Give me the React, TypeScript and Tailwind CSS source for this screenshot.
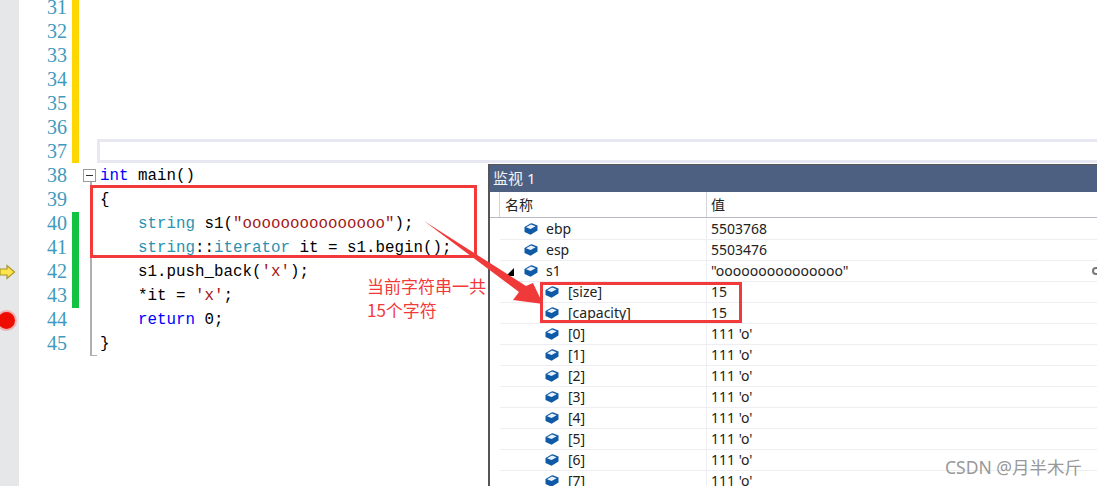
const mono = "font-['Liberation_Mono',monospace]";

type Tok = { t: string; c?: string };

const KW = "text-[#0000ff]";
const TY = "text-[#2b91af]";
const ST = "text-[#a31515]";

const codeLines: Record<number, Tok[]> = {
  38: [{ t: "int", c: KW }, { t: " main()" }],
  39: [{ t: "{" }],
  40: [{ t: "    " }, { t: "string", c: TY }, { t: " s1(" }, { t: '"ooooooooooooooo"', c: ST }, { t: ");" }],
  41: [{ t: "    " }, { t: "string", c: TY }, { t: "::" }, { t: "iterator", c: TY }, { t: " it = s1.begin();" }],
  42: [{ t: "    s1.push_back(" }, { t: "'x'", c: ST }, { t: ");" }],
  43: [{ t: "    *it = " }, { t: "'x'", c: ST }, { t: ";" }],
  44: [{ t: "    " }, { t: "return", c: KW }, { t: " 0;" }],
  45: [{ t: "}" }],
};

const lineNums = [31, 32, 33, 34, 35, 36, 37, 38, 39, 40, 41, 42, 43, 44, 45];

function Cube() {
  return (
    <svg width="14" height="12" viewBox="0 0 14 12" className="shrink-0">
      <path d="M0.5 4 L6.5 0.5 Q7.5 0.2 8.5 0.5 L13.5 2.5 V7.5 L7 11.5 Q6.5 11.8 6 11.5 L0.5 9 Z" fill="#0f5aa6" />
      <path d="M2 4.2 L7 1.6 L11.6 3.2 L6.6 6 Z" fill="#eaf2fb" />
    </svg>
  );
}

function WatchRow({ name, value, indent }: { name: string; value: string; indent?: boolean }) {
  return (
    <div className="flex h-[21px] ml-[10px] border-b border-[#eeeef2] items-center">
      <div className={`w-[206px] flex items-center shrink-0 ${indent ? "pl-[45px]" : "pl-[24px]"}`}>
        <Cube />
        <span className={`${indent ? "ml-[9px]" : "ml-[8px]"} pb-[2px] text-[#222]`}>{name}</span>
      </div>
      <div className="pl-[4px] pb-[2px] border-l border-[#eeeef2] h-full flex items-center text-[#222] whitespace-nowrap">{value}</div>
    </div>
  );
}

export default function App() {
  const rows = ["[0]", "[1]", "[2]", "[3]", "[4]", "[5]", "[6]", "[7]"];
  return (
    <div className="relative w-[1097px] h-[486px] overflow-hidden bg-white flex">
      {/* glyph margin */}
      <div className="w-[19px] shrink-0 bg-[#e6e7e8] relative">
        <svg width="16" height="16" viewBox="0 0 16 16" className="absolute left-0 top-[264px]">
          <path d="M0 5 H7 V1.5 L14.5 8 L7 14.5 V11 H0 Z" fill="#fde64b" stroke="#a8962e" strokeWidth="1.2" />
        </svg>
        <div className="absolute left-[-4px] top-[310px] w-[21px] h-[21px] rounded-full bg-[#ee0c00] border-2 border-[#eeb4b4]" />
      </div>

      {/* line numbers and change bar */}
      <div className="w-[53px] shrink-0 -mt-[5px] flex flex-col items-end pr-[5px] font-['Liberation_Serif',serif] text-[20px] text-[#3f9abd]">
        {lineNums.map((n) => (
          <div key={n} className="h-[24px] leading-[24px]">{n}</div>
        ))}
      </div>
      <div className="w-[7px] shrink-0 flex flex-col">
        <div className="h-[163px] bg-[#ffd700]" />
        <div className="h-[49px]" />
        <div className="h-[96px] bg-[#14c242]" />
      </div>

      {/* code */}
      <div className="flex-1 relative">
        <div className="h-[139px]" />
        <div className="h-[24px] ml-[18px] border-[3px] border-r-0 border-[#e8e8f2]" />
        <div className={`${mono} text-[15.83px] text-black pl-[21px] pt-[1px] whitespace-pre`}>
          {Object.keys(codeLines).map((k) => (
            <div key={k} className="h-[24px] leading-[24px]">
              {codeLines[Number(k)].map((tok, i) => (
                <span key={i} className={tok.c}>{tok.t}</span>
              ))}
            </div>
          ))}
        </div>
        {/* fold marker */}
        <div className="absolute left-[4px] top-[169px] w-[13px] h-[13px] border border-[#9a9a9a] flex items-center justify-center bg-white">
          <div className="w-[7px] h-[1px] bg-[#333]" />
        </div>
        <div className="absolute left-[11px] top-[182px] w-[7px] h-[174px] border-l-2 border-b border-[#b0b0b0]" />
      </div>

      {/* watch window */}
      <div className="absolute left-[488px] top-[164px] w-[609px] h-[322px] bg-white border-l-2 border-t border-[#555] font-['Noto_Sans','Noto_Sans_CJK_SC',sans-serif] text-[14px]">
        <div className="h-[27px] bg-[#4d6082] text-[#f2f4f8] text-[15px] flex items-center pl-[3px]">监视 1</div>
        <div className="h-[26px] flex border-b border-[#b9b9c4] text-[#222] items-center">
          <div className="w-[10px] h-full border-r border-[#d4d4dc]" />
          <div className="w-[206px] pl-[5px]">名称</div>
          <div className="pl-[4px] border-l border-[#d4d4dc] h-full flex items-center">值</div>
        </div>
        <div className="mt-[1px]">
          <WatchRow name="ebp" value="5503768" />
          <WatchRow name="esp" value="5503476" />
          <WatchRow name="s1" value={'"ooooooooooooooo"'} />
          <WatchRow name="[size]" value="15" indent />
          <WatchRow name="[capacity]" value="15" indent />
          {rows.map((r) => (
            <WatchRow key={r} name={r} value="111 'o'" indent />
          ))}
        </div>
        <div className="absolute left-[16px] top-[103px] w-0 h-0 border-l-[8px] border-l-transparent border-b-[8px] border-b-black" />
        <div className="absolute right-[-3px] top-[102px] w-[8px] h-[8px] rounded-full border-2 border-[#777]" />
      </div>

      {/* annotations */}
      <div className="absolute left-[90px] top-[185px] w-[387px] h-[73px] border-[3px] border-[#f33a3a]" />
      <div className="absolute left-[540px] top-[282px] w-[202px] h-[41px] border-[3px] border-[#f33a3a]" />
      <svg width="130" height="100" viewBox="0 0 130 100" className="absolute left-[420px] top-[218px]">
        <path d="M4 3 L106 68 L113 65 L123 86 L93 82 L99 74 Z" fill="#f03a3a" />
      </svg>
      <div className="absolute left-[367px] top-[274px] text-[17px] leading-[24px] text-[#f33a3a] font-['Noto_Sans_CJK_SC',sans-serif]">
        <div>当前字符串一共</div>
        <div>15个字符</div>
      </div>
      <div className="absolute left-[945px] top-[456px] text-[17.5px] leading-[22px] text-[#999] font-['Noto_Sans','Noto_Sans_CJK_SC',sans-serif] whitespace-nowrap">
        CSDN @月半木斤
      </div>
    </div>
  );
}
